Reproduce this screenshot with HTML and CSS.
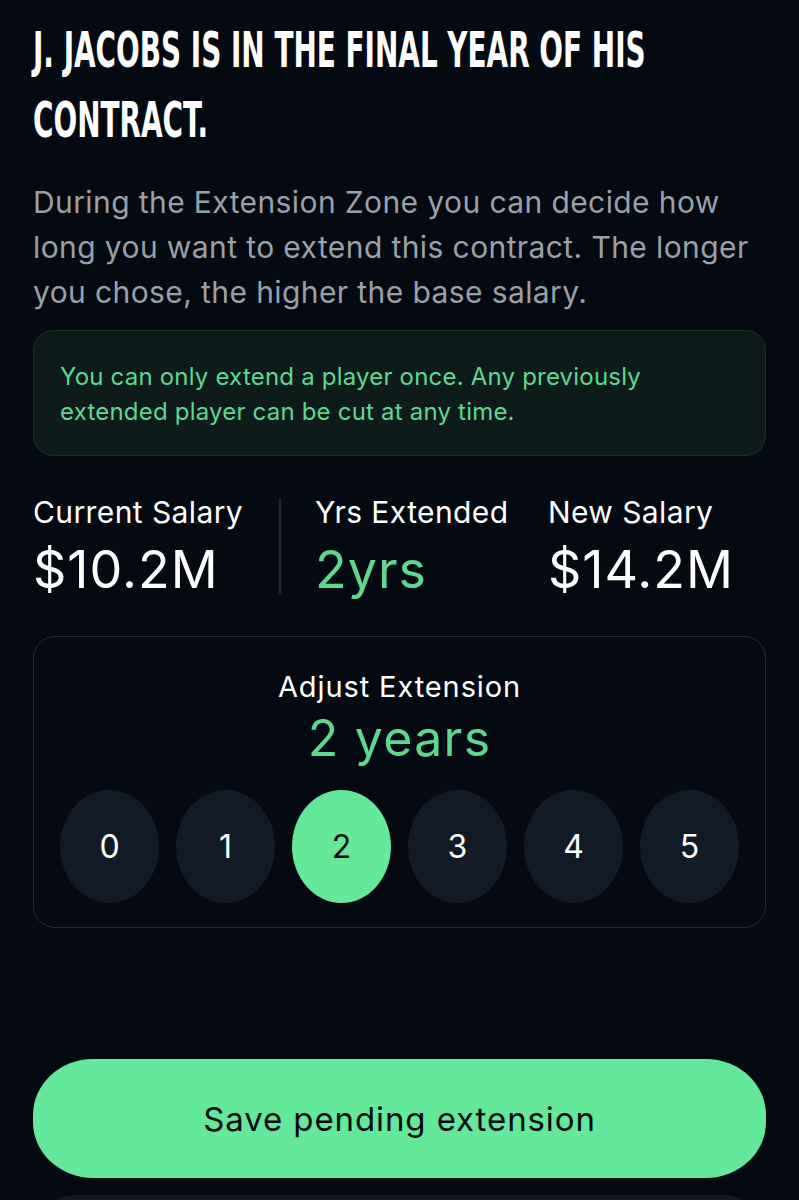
FILE: index.html
```html
<!DOCTYPE html>
<html lang="en">
<head>
<meta charset="utf-8">
<link rel="stylesheet" href="styles.css">
</head>
<body>
<main class="page">
  <h1 class="title">J. JACOBS IS IN THE FINAL YEAR OF HIS<br>CONTRACT.</h1>
  <p class="intro">During the Extension Zone you can decide how long you want to extend this contract. The longer you chose, the higher the base salary.</p>
  <div class="notice">You can only extend a player once. Any previously extended player can be cut at any time.</div>
  <div class="stats">
    <div class="stat stat-current">
      <div class="stat-label">Current Salary</div>
      <div class="stat-value">$10.2M</div>
    </div>
    <div class="divider"></div>
    <div class="stat stat-years">
      <div class="stat-label">Yrs Extended</div>
      <div class="stat-value green">2yrs</div>
    </div>
    <div class="stat stat-new">
      <div class="stat-label">New Salary</div>
      <div class="stat-value">$14.2M</div>
    </div>
  </div>
  <section class="adjust">
    <div class="adjust-label">Adjust Extension</div>
    <div class="adjust-value">2 years</div>
    <div class="options">
      <button class="opt">0</button>
      <button class="opt">1</button>
      <button class="opt active">2</button>
      <button class="opt">3</button>
      <button class="opt">4</button>
      <button class="opt">5</button>
    </div>
  </section>
  <button class="save">Save pending extension</button>
  <div class="next"></div>
</main>
</body>
</html>
```
FILE: styles.css
```css
html, body {
  margin: 0;
  padding: 0;
  background: #050911;
  overflow: hidden;
}
body {
  font-family: Inter, "Noto Sans", sans-serif;
  color: #ffffff;
}
.page {
  padding: 15px 33px 0 33px;
  display: flex;
  flex-direction: column;
}
.title {
  margin: 0;
  font-family: "DejaVu Sans", sans-serif;
  font-stretch: condensed;
  font-weight: 700;
  font-size: 50px;
  line-height: 70px;
  letter-spacing: 0;
  color: #ffffff;
  white-space: nowrap;
  transform: scaleX(0.62);
  transform-origin: left top;
}
.intro {
  margin: 25px 0 0 0;
  font-size: 30px;
  line-height: 45px;
  color: #9aa0aa;
  letter-spacing: 0.4px;
}
.notice {
  margin-top: 15px;
  background: #0e1b1b;
  border: 1.5px solid #1b3127;
  border-radius: 20px;
  padding: 28px 26px 26px 26px;
  color: #5fd88f;
  font-size: 24px;
  line-height: 35px;
  letter-spacing: 0.2px;
}
.stats {
  margin-top: 38px;
  display: flex;
  align-items: stretch;
}
.stat {
  display: flex;
  flex-direction: column;
}
.stat-current { width: 246px; }
.stat-years { width: 233px; margin-left: 34px; }
.divider {
  width: 2px;
  background: #232832;
  margin: 4px 0 6px 0;
}
.stat-label {
  font-size: 30px;
  line-height: 36px;
  letter-spacing: 0.4px;
}
.stat-value {
  font-size: 52px;
  line-height: 60px;
  margin-top: 10px;
  letter-spacing: 1px;
}
.green { color: #5fd88f; }
.adjust {
  margin-top: 36px;
  border: 1.5px solid #252a35;
  border-radius: 22px;
  padding: 32px 26px 24px 26px;
  display: flex;
  flex-direction: column;
  align-items: center;
}
.adjust-label {
  font-size: 29px;
  line-height: 36px;
  letter-spacing: 0.9px;
}
.adjust-value {
  font-size: 50px;
  line-height: 56px;
  color: #5fd88f;
  margin-top: 5px;
  letter-spacing: 1.3px;
}
.options {
  margin-top: 24px;
  display: flex;
  gap: 17px;
}
.opt {
  width: 99px;
  height: 113px;
  border: none;
  border-radius: 50%;
  background: #131a27;
  color: #ffffff;
  font-family: Inter, sans-serif;
  font-size: 32px;
  padding: 0;
}
.opt.active {
  background: #63e999;
  color: #05080f;
}
.save {
  margin-top: 131px;
  height: 119px;
  border: none;
  border-radius: 60px / 56px;
  background: #63e999;
  color: #050911;
  font-family: Inter, sans-serif;
  font-size: 33px;
  letter-spacing: 0.9px;
}
.next {
  margin: 17px 7px 0 7px;
  height: 60px;
  background: #121826;
  border-radius: 34px 34px 0 0;
}
```
